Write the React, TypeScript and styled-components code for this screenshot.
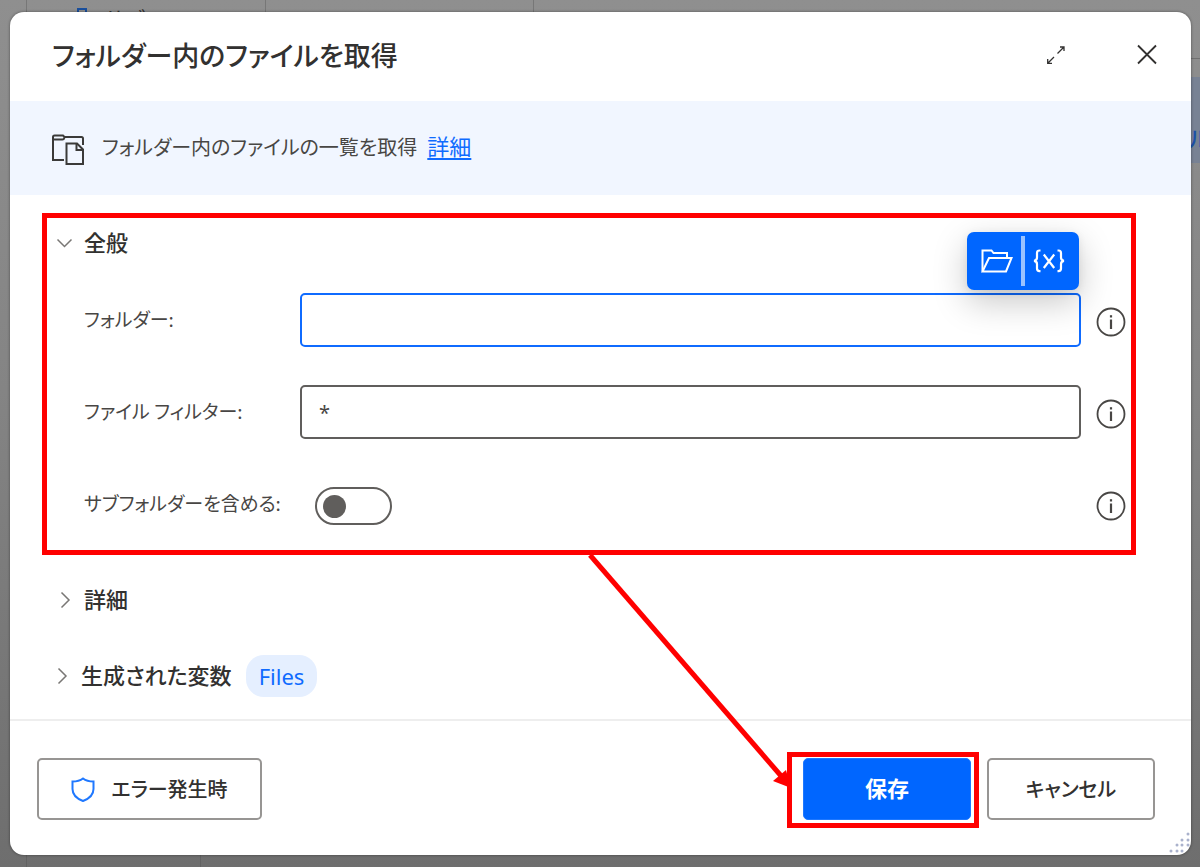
import React from 'react';
import styled, { createGlobalStyle, css } from 'styled-components';

const Global = createGlobalStyle`
  *, *::before, *::after { box-sizing: border-box; }
  body { margin: 0; }
  body, button, input {
    font-family: "Noto Sans CJK JP", "Noto Sans", sans-serif;
    font-feature-settings: "palt";
  }
`;

const Backdrop = styled.div`
  position: relative;
  display: flex;
  min-height: 100vh;
  padding: 12px 9px 12px 10px;
  background: linear-gradient(#8f8f8f, #848484 45%, #6e6e6e);
  overflow: hidden;
`;

const Behind = styled.div`
  position: absolute;
  inset: 0;
`;

const GridLine = styled.span<{ $x: number; $low?: boolean }>`
  position: absolute;
  left: ${p => p.$x}px;
  ${p => (p.$low ? 'bottom: 0;' : 'top: 0;')}
  width: 1px;
  height: 24px;
  background: ${p => (p.$low ? '#626262' : '#777777')};
`;

const BehindIcon = styled.span`
  position: absolute;
  left: 77px;
  top: 8px;
  width: 10px;
  height: 16px;
  border: 2px solid #1a4f9c;
`;

const BehindTab = styled.span`
  position: absolute;
  left: 104px;
  top: 6px;
  font-size: 22px;
  line-height: 24px;
  color: #333333;
`;

const BehindRule = styled.span`
  position: absolute;
  right: 0;
  top: 58px;
  width: 30px;
  height: 1px;
  background: #707070;
`;

const BehindRow = styled.span`
  position: absolute;
  right: 0;
  top: 77px;
  width: 30px;
  height: 86px;
  padding-top: 44px;
  background: #788294;
  color: #1c51a8;
  font-size: 22px;
  font-weight: 500;
  line-height: 32px;
  text-indent: 19px;
  white-space: nowrap;
`;

const Dialog = styled.main`
  position: relative;
  flex: 1;
  min-width: 0;
  display: flex;
  flex-direction: column;
  border-radius: 14px;
  background: #ffffff;
  box-shadow: 0 0 3px rgba(0, 0, 0, 0.45);
  color: #323130;
`;

const Header = styled.header`
  display: flex;
  align-items: center;
  height: 89px;
  padding: 0 24px 4px 42px;
`;

const Title = styled.h1`
  flex: 1;
  margin: 0;
  font-size: 27px;
  font-weight: 500;
  line-height: 40px;
`;

const IconButton = styled.button`
  display: flex;
  align-items: center;
  justify-content: center;
  width: 40px;
  height: 40px;
  padding: 0;
  border: 0;
  background: none;
  color: #323130;
`;

const WindowButtons = styled.div`
  display: flex;
  gap: 51px;
`;

const Banner = styled.div`
  display: flex;
  align-items: center;
  gap: 18px;
  height: 94px;
  padding: 2px 42px 0;
  background: #f1f6ff;
  color: #484644;
`;

const BannerText = styled.p`
  margin: 0;
  padding-bottom: 6px;
  font-size: 20px;
  line-height: 32px;
`;

const Link = styled.a`
  margin-left: 10px;
  color: #0f6bff;
  font-size: 22px;
  text-decoration: underline;
  text-underline-offset: 3px;
  text-decoration-thickness: 2px;
`;

const Content = styled.div`
  flex: 1;
  padding: 18px 55px 0 32px;
`;

const General = styled.section`
  display: flex;
  flex-direction: column;
  height: 342px;
  padding: 0 5px 0 9px;
  border: 5px solid #ff0000;
`;

const SectionHeading = styled.h2`
  flex: 1;
  display: flex;
  align-items: flex-start;
  margin: 0;
`;

const SectionButton = styled.button`
  display: flex;
  align-items: center;
  gap: 10px;
  height: 50px;
  padding: 0;
  border: 0;
  background: none;
  color: #323130;
`;

const SectionName = styled.span`
  padding-bottom: 4px;
  font-size: 22px;
  font-weight: 500;
  line-height: 32px;
`;

const Field = styled.div`
  display: grid;
  grid-template-columns: 216px 1fr 30px;
  column-gap: 15px;
  align-items: center;
  height: 92px;
  padding-left: 28px;
`;

const Label = styled.label`
  margin-right: -15px;
  padding-bottom: 3px;
  font-size: 19px;
  line-height: 32px;
  color: #484644;
  white-space: nowrap;
`;

const Control = styled.div`
  position: relative;
  display: flex;
  margin-left: -15px;
`;

const TextBox = styled.input`
  flex: 1;
  min-width: 0;
  height: 54px;
  padding: 0 17px;
  border: 2px solid #605e5c;
  border-radius: 5px;
  outline: none;
  background: #ffffff;
  color: #484644;
  font-family: "Noto Sans", "Noto Sans CJK JP", sans-serif;
  font-size: 20px;

  &[data-active='true'] { border-color: #0f6bff; background: transparent; }
`;

const PickerBar = styled.div`
  position: absolute;
  right: 2px;
  bottom: 57px;
  display: flex;
  align-items: center;
  width: 112px;
  height: 58px;
  padding: 0 6px;
  border-radius: 7px;
  background: #0066ff;
  box-shadow: 0 12px 34px rgba(0, 0, 0, 0.22), 0 2px 8px rgba(0, 0, 0, 0.08);
`;

const PickerButton = styled.button`
  flex: 1;
  display: flex;
  align-items: center;
  justify-content: center;
  height: 58px;
  padding: 0;
  border: 0;
  background: none;
  color: #ffffff;
`;

const PickerDivider = styled.span`
  width: 4px;
  height: 50px;
  background: #99c2ff;
`;

const Toggle = styled.input`
  appearance: none;
  display: flex;
  align-items: center;
  width: 77px;
  height: 38px;
  margin: 4px 0 0 15px;
  padding: 0 6px;
  border: 2px solid #605e5c;
  border-radius: 19px;
  background: #ffffff;

  &::before {
    content: '';
    width: 23px;
    height: 23px;
    border-radius: 50%;
    background: #605e5c;
  }
  &:checked { justify-content: flex-end; }
`;

const InfoButton = styled(IconButton)`
  width: 30px;
  height: 30px;
  margin-top: 4px;
`;

const Collapsed = styled.section<{ $tight?: boolean }>`
  display: flex;
  align-items: center;
  gap: 14px;
  height: ${p => (p.$tight ? 62 : 90)}px;
  padding-left: ${p => (p.$tight ? 11 : 14)}px;

  ${SectionHeading} { flex: none; }
`;

const Chip = styled.span`
  padding: 5px 13px;
  border-radius: 18px;
  background: #e5efff;
  color: #0f6bff;
  font-family: "Noto Sans", sans-serif;
  font-size: 22px;
  line-height: 32px;
`;

const Footer = styled.footer`
  display: flex;
  align-items: center;
  gap: 16px;
  height: 136px;
  padding: 2px 36px 0 27px;
  border-top: 2px solid #eeeeee;
`;

const actionColors = {
  primary: css`
    padding: 0 0 4px;
    border: 1px solid #1f78ff;
    background: #0066ff;
    color: #ffffff;
    font-size: 22px;
    font-weight: 700;
  `,
  plain: css`
    padding: 0;
    border: 2px solid #979593;
    background: #ffffff;
    color: #323130;
    font-size: 20px;
    font-weight: 500;
  `,
};

const Action = styled.button<{ $kind: 'primary' | 'plain'; $wide?: boolean }>`
  display: flex;
  align-items: center;
  justify-content: center;
  gap: 16px;
  width: ${p => (p.$wide ? 225 : 168)}px;
  height: 62px;
  border-radius: 5px;
  line-height: 32px;
  ${p => actionColors[p.$kind]}
`;

const SaveArea = styled.div`
  position: relative;
  margin-left: auto;
`;

const Callout = styled.span`
  position: absolute;
  inset: -6px -8px -8px -16px;
  border: 5px solid #ff0000;
  pointer-events: none;
`;

const Arrow = styled.svg`
  position: absolute;
  right: 178px;
  bottom: 30px;
  pointer-events: none;
`;

const Grip = styled.svg`
  position: absolute;
  right: 0;
  bottom: 0;
`;

const Chevron = ({ open }: { open?: boolean }) => (
  <svg width="18" height="18" viewBox="0 0 18 18" fill="none" stroke="#797775" strokeWidth="1.5">
    <path d={open ? 'M1.500 5.500l7 7 7-7' : 'M5.500 1.500l7.500 7.500-7.500 7.500'} />
  </svg>
);

const Info = ({ about }: { about: string }) => (
  <InfoButton type="button" aria-label={about}>
    <svg width="30" height="30" viewBox="0 0 30 30" fill="none" stroke="#484644">
      <circle cx="15" cy="15" r="13.5" strokeWidth="1.8" />
      <path d="M15 12.500v9.500" strokeWidth="2.2" />
      <path d="M15 8.200v2.300" strokeWidth="2.2" />
    </svg>
  </InfoButton>
);

const gripDots = [
  [21, 3],
  [15, 9], [21, 9],
  [10, 14], [15, 14], [21, 14],
  [4, 20], [10, 20], [15, 20],
];

export default function App() {
  return (
    <>
      <Global />
      <Backdrop>
        <Behind aria-hidden="true">
          <GridLine $x={26} />
          <GridLine $x={265} />
          <GridLine $x={533} />
          <GridLine $x={26} $low />
          <GridLine $x={200} $low />
          <BehindIcon />
          <BehindTab>サブ</BehindTab>
          <BehindRule />
          <BehindRow>ル</BehindRow>
        </Behind>
        <Dialog role="dialog" aria-labelledby="dialog-title">
          <Header>
            <Title id="dialog-title">フォルダー内のファイルを取得</Title>
            <WindowButtons>
              <IconButton type="button" aria-label="最大化">
                <svg width="20" height="20" viewBox="0 0 20 20" fill="none" stroke="currentColor" strokeWidth="1.3">
                  <path d="M11.500 8.500L17.500 2.500M14 2h4v4M8 12L2 18M1.700 14v4.300h4.300" />
                </svg>
              </IconButton>
              <IconButton type="button" aria-label="閉じる">
                <svg width="22" height="22" viewBox="0 0 22 22" fill="none" stroke="currentColor" strokeWidth="1.8">
                  <path d="M2 1.500l18 18M20 1.500L2 19.500" />
                </svg>
              </IconButton>
            </WindowButtons>
          </Header>

          <Banner>
            <svg width="32" height="32" viewBox="0 0 32 32" fill="none" stroke="#3b3a39" strokeWidth="2">
              <path d="M12 27H1V4q0-1.500 1.500-1.500H11l1.500 1.500H29.500q1.500 0 1.500 1.500V12" />
              <path d="M1 5.500q0 1 1.500 1H10.500q1.500 0 2-2" />
              <path d="M14.500 10.500h10.500l6 6V31H14.500z" />
              <path d="M24.500 10.500v6.500h6.500" />
            </svg>
            <BannerText>
              フォルダー内のファイルの一覧を取得
              <Link href="#details">詳細</Link>
            </BannerText>
          </Banner>

          <Content>
            <General>
              <SectionHeading>
                <SectionButton type="button" aria-expanded="true">
                  <Chevron open />
                  <SectionName>全般</SectionName>
                </SectionButton>
              </SectionHeading>
              <Field>
                <Label htmlFor="folder">フォルダー:</Label>
                <Control>
                  <TextBox id="folder" type="text" data-active="true" />
                  <PickerBar>
                    <PickerButton type="button" aria-label="フォルダーの選択">
                      <svg width="32" height="24" viewBox="0 0 32 24" fill="none" stroke="currentColor" strokeWidth="2">
                        <path d="M1.500 22V1.500h9l2 2.500h13.500v4.500" />
                        <path d="M1.500 22.500L8 9h22.500l-5.500 13.500z" />
                      </svg>
                    </PickerButton>
                    <PickerDivider />
                    <PickerButton type="button" aria-label="変数の選択">
                      <svg width="32" height="24" viewBox="0 0 32 24" fill="none" stroke="currentColor" strokeWidth="2.2">
                        <path d="M7.500 1.500H6.500q-2.500 0-2.500 2.500v4.500q0 3-3 3.300q3 .3 3 3.300v4.500q0 2.500 2.500 2.500h1" />
                        <path d="M24.500 1.500h1q2.500 0 2.500 2.500v4.500q0 3 3 3.300q-3 .3-3 3.300v4.500q0 2.500-2.500 2.500h-1" />
                        <path d="M10.800 5.500L21.200 19M21.200 5.500L10.800 19" />
                      </svg>
                    </PickerButton>
                  </PickerBar>
                </Control>
                <Info about="フォルダーの情報" />
              </Field>
              <Field>
                <Label htmlFor="filter">ファイル フィルター:</Label>
                <Control>
                  <TextBox id="filter" type="text" defaultValue="*" />
                </Control>
                <Info about="ファイル フィルターの情報" />
              </Field>
              <Field>
                <Label htmlFor="subfolders">サブフォルダーを含める:</Label>
                <Control>
                  <Toggle id="subfolders" type="checkbox" role="switch" />
                </Control>
                <Info about="サブフォルダーの情報" />
              </Field>
            </General>

            <Collapsed>
              <SectionHeading>
                <SectionButton type="button" aria-expanded="false">
                  <Chevron />
                  <SectionName>詳細</SectionName>
                </SectionButton>
              </SectionHeading>
            </Collapsed>
            <Collapsed $tight>
              <SectionHeading>
                <SectionButton type="button" aria-expanded="false">
                  <Chevron />
                  <SectionName>生成された変数</SectionName>
                </SectionButton>
              </SectionHeading>
              <Chip>Files</Chip>
            </Collapsed>
          </Content>

          <Footer>
            <Action type="button" $kind="plain" $wide>
              <svg width="24" height="25" viewBox="0 0 24 25" fill="none" stroke="#1f78ff" strokeWidth="2">
                <path d="M12 1.500Q8 4.500 1.500 4.500V12q0 8 10.500 12q10.500-4 10.500-12V4.500Q16 4.500 12 1.500z" />
              </svg>
              エラー発生時
            </Action>
            <SaveArea>
              <Action type="button" $kind="primary">保存</Action>
              <Callout />
              <Arrow width="206" height="236" viewBox="0 0 206 236" aria-hidden="true">
                <path d="M3 1L195 223" stroke="#ff0000" strokeWidth="5" />
                <path d="M204 234L186 227L199 216z" fill="#ff0000" />
              </Arrow>
            </SaveArea>
            <Action type="button" $kind="plain">キャンセル</Action>
          </Footer>

          <Grip width="24" height="24" viewBox="0 0 24 24" fill="#aab2cc" aria-hidden="true">
            {gripDots.map(([x, y]) => (
              <circle key={`${x}-${y}`} cx={x} cy={y} r="1.5" />
            ))}
          </Grip>
        </Dialog>
      </Backdrop>
    </>
  );
}
